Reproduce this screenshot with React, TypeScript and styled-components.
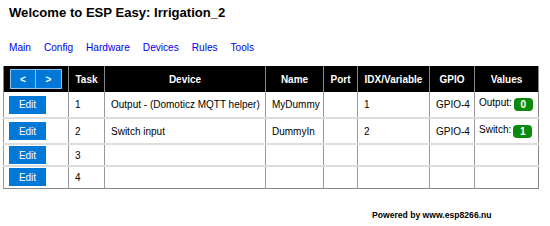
import React from 'react';
import styled, { createGlobalStyle } from 'styled-components';

const GlobalStyle = createGlobalStyle`
  body {
    margin: 0;
    background: #ffffff;
    font-family: "Liberation Sans", Arial, sans-serif;
    color: #000000;
  }
`;

interface Task {
  nr: number;
  device?: string;
  name?: string;
  idx?: string;
  gpio?: string;
  valueName?: string;
  value?: string;
}

const tasks: Task[] = [
  { nr: 1, device: 'Output - (Domoticz MQTT helper)', name: 'MyDummy', idx: '1', gpio: 'GPIO-4', valueName: 'Output:', value: '0' },
  { nr: 2, device: 'Switch input', name: 'DummyIn', idx: '2', gpio: 'GPIO-4', valueName: 'Switch:', value: '1' },
  { nr: 3 },
  { nr: 4 },
];

const columns = [65, 36, 161, 58, 34, 72, 45, 64];

const Page = styled.div`
  padding: 5px 0 0 3px;
`;

const Title = styled.h1`
  margin: 0 0 0 6px;
  font-size: 13.1px;
  line-height: 16px;
  font-weight: bold;
`;

const Menu = styled.nav`
  display: flex;
  gap: 13px;
  margin: 21px 0 0 6px;
  line-height: 12px;
`;

const MenuLink = styled.a`
  font-size: 10.1px;
  color: #0000ee;
  text-decoration: none;
`;

const Table = styled.table`
  margin-top: 12px;
  width: 535px;
  table-layout: fixed;
  border-collapse: collapse;
  border-left: 1px solid #888888;
  border-right: 1px solid #888888;
  border-bottom: 1px solid #888888;
  font-size: 10px;
`;

const HeadCell = styled.th`
  background: #000000;
  color: #ffffff;
  font-weight: bold;
  height: 26px;
  padding: 0 4px;
  text-align: center;
  border-left: 1px solid #888888;
  white-space: nowrap;
`;

const Row = styled.tr<{ $tall: boolean }>`
  height: ${({ $tall }) => ($tall ? '26px' : '22px')};
  border-bottom: 2px solid #dddddd;

  &:last-child {
    border-bottom: none;
  }
`;

const Cell = styled.td`
  padding: 0 6px;
  border-left: 1px solid #999999;
  white-space: nowrap;
  vertical-align: middle;
`;

const ButtonCell = styled(Cell)`
  padding: 0 5px;
`;

const BlueButton = styled.button`
  background: #0078d7;
  color: #ffffff;
  border: none;
  border-radius: 0;
  font-family: inherit;
  font-size: 10px;
  padding: 0;
  cursor: pointer;
`;

const EditButton = styled(BlueButton)`
  display: block;
  width: 37px;
  height: 18px;
`;

const PagerGroup = styled.div`
  display: flex;
  margin-left: 2px;
`;

const PagerButton = styled(BlueButton)`
  width: 26px;
  height: 20px;
  border: 1px solid #8ec3f2;
  font-weight: bold;

  & + & {
    border-left: none;
  }
`;

const ValuesCell = styled(Cell)`
  padding: 0 4px;
`;

const ValueLine = styled.div`
  display: flex;
  align-items: flex-start;
  gap: 2px;
`;

const ValueLabel = styled.span`
  line-height: 9px;
`;

const Badge = styled.span`
  display: inline-block;
  min-width: 19px;
  height: 13px;
  line-height: 13px;
  border-radius: 4px;
  background: #0a8a0a;
  color: #ffffff;
  font-weight: bold;
  text-align: center;
`;

const Footer = styled.h6`
  margin: 21px 0 0 369px;
  font-size: 8.6px;
  line-height: 10px;
  font-weight: bold;
`;

export default function App() {
  return (
    <>
      <GlobalStyle />
      <Page>
        <Title>Welcome to ESP Easy: Irrigation_2</Title>
        <Menu>
          {['Main', 'Config', 'Hardware', 'Devices', 'Rules', 'Tools'].map((item) => (
            <MenuLink key={item} href="#">
              {item}
            </MenuLink>
          ))}
        </Menu>
        <Table>
          <colgroup>
            {columns.map((w, i) => (
              <col key={i} style={{ width: w }} />
            ))}
          </colgroup>
          <thead>
            <tr>
              <HeadCell>
                <PagerGroup>
                  <PagerButton>&lt;</PagerButton>
                  <PagerButton>&gt;</PagerButton>
                </PagerGroup>
              </HeadCell>
              <HeadCell>Task</HeadCell>
              <HeadCell>Device</HeadCell>
              <HeadCell>Name</HeadCell>
              <HeadCell>Port</HeadCell>
              <HeadCell>IDX/Variable</HeadCell>
              <HeadCell>GPIO</HeadCell>
              <HeadCell>Values</HeadCell>
            </tr>
          </thead>
          <tbody>
            {tasks.map((t) => (
              <Row key={t.nr} $tall={!!t.value}>
                <ButtonCell>
                  <EditButton>Edit</EditButton>
                </ButtonCell>
                <Cell>{t.nr}</Cell>
                <Cell>{t.device}</Cell>
                <Cell>{t.name}</Cell>
                <Cell></Cell>
                <Cell>{t.idx}</Cell>
                <Cell>{t.gpio}</Cell>
                <ValuesCell>
                  {t.value && (
                    <ValueLine>
                      <ValueLabel>{t.valueName}</ValueLabel>
                      <Badge>{t.value}</Badge>
                    </ValueLine>
                  )}
                </ValuesCell>
              </Row>
            ))}
          </tbody>
        </Table>
        <Footer>Powered by www.esp8266.nu</Footer>
      </Page>
    </>
  );
}
